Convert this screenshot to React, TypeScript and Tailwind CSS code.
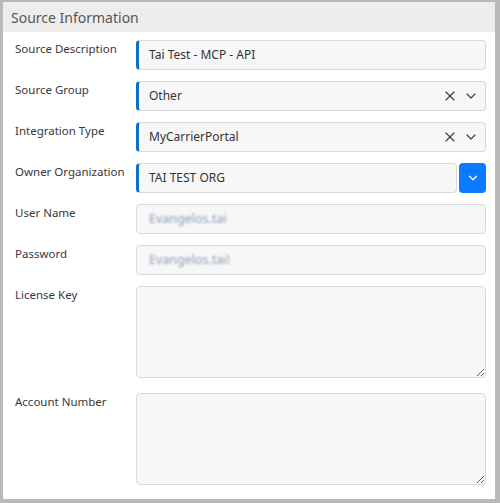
import React from "react";
import { X, ChevronDown } from "lucide-react";

const Label: React.FC<{ text: string }> = ({ text }) => (
  <div className="pt-[1px] text-[11.5px] leading-[16px] text-[#383838]">{text}</div>
);

const Field: React.FC<{ children: React.ReactNode; required?: boolean; className?: string }> = ({
  children,
  required,
  className = "",
}) => (
  <div
    className={`h-[30px] flex items-center rounded-[4px] border border-[#d6d9dd] bg-[#f7f7f7] text-[12px] text-[#333] ${
      required ? "border-l-[3px] border-l-[#0d6fc4] pl-[10px]" : "pl-[12px]"
    } ${className}`}
  >
    {children}
  </div>
);

const Clear = () => (
  <>
    <X className="w-[16px] h-[16px] text-[#3a3a3a] mr-[5px]" strokeWidth={1.7} />
    <ChevronDown className="w-[16px] h-[16px] text-[#3a3a3a] mr-[6px]" strokeWidth={1.7} />
  </>
);

export default function App() {
  return (
    <div className="w-[500px] h-[503px] bg-white font-['Segoe_UI','Noto_Sans',sans-serif]">
      <div className="h-full flex flex-col border-[#b9b9b9] border-l-[3px] border-t-[2px] border-r-[5px] border-b-[4px]">
        <div className="h-[30px] shrink-0 bg-[#ededed] px-[8px] flex items-center text-[14px] text-[#555]">
          Source Information
        </div>
        <div className="pl-[12px] pt-[8px] flex flex-col">
          <div className="grid grid-cols-[121px_350px] mb-[11px]">
            <Label text="Source Description" />
            <Field required>Tai Test - MCP - API</Field>
          </div>
          <div className="grid grid-cols-[121px_350px] mb-[11px]">
            <Label text="Source Group" />
            <Field required>
              <span className="flex-1">Other</span>
              <Clear />
            </Field>
          </div>
          <div className="grid grid-cols-[121px_350px] mb-[11px]">
            <Label text="Integration Type" />
            <Field required>
              <span className="flex-1">MyCarrierPortal</span>
              <Clear />
            </Field>
          </div>
          <div className="grid grid-cols-[121px_350px] mb-[11px]">
            <Label text="Owner Organization" />
            <div className="flex gap-[2px]">
              <Field required className="flex-1">TAI TEST ORG</Field>
              <button className="w-[27px] h-[30px] rounded-[4px] bg-[#0a7bff] flex items-center justify-center">
                <ChevronDown className="w-[14px] h-[14px] text-white" strokeWidth={2.2} />
              </button>
            </div>
          </div>
          <div className="grid grid-cols-[121px_350px] mb-[11px]">
            <Label text="User Name" />
            <Field>
              <span className="blur-[1.2px] text-[12.5px] text-[#8d9eb3]">Evangelos.tai</span>
            </Field>
          </div>
          <div className="grid grid-cols-[121px_350px] mb-[11px]">
            <Label text="Password" />
            <Field>
              <span className="blur-[1.2px] text-[12.5px] text-[#8d9eb3]">Evangelos.tai!</span>
            </Field>
          </div>
          <div className="grid grid-cols-[121px_350px] mb-[15px]">
            <Label text="License Key" />
            <textarea className="h-[92px] rounded-[4px] border border-[#d6d9dd] bg-[#f7f7f7] outline-none" />
          </div>
          <div className="grid grid-cols-[121px_350px]">
            <Label text="Account Number" />
            <textarea className="h-[92px] rounded-[4px] border border-[#d6d9dd] bg-[#f7f7f7] outline-none" />
          </div>
        </div>
      </div>
    </div>
  );
}
